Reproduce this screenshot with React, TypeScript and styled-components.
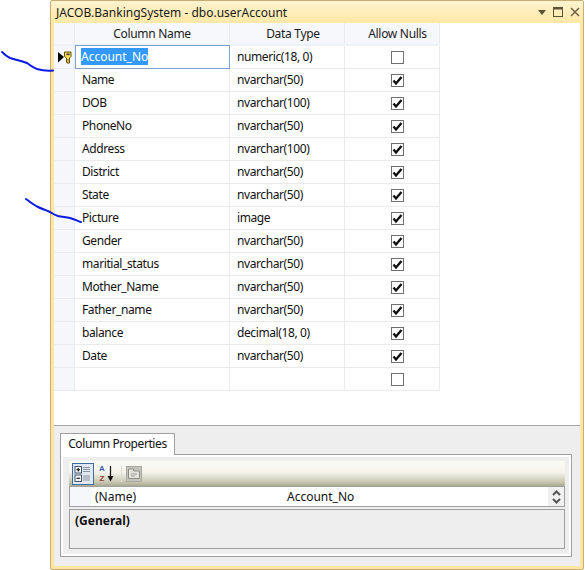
import React from "react";
import styled, { createGlobalStyle } from "styled-components";

const GlobalStyle = createGlobalStyle`
  html, body {
    margin: 0;
    padding: 0;
    background: #fff;
  }
  * {
    box-sizing: border-box;
  }
`;

const columns = [
  { name: "Account_No", type: "numeric(18, 0)", nulls: false },
  { name: "Name", type: "nvarchar(50)", nulls: true },
  { name: "DOB", type: "nvarchar(100)", nulls: true },
  { name: "PhoneNo", type: "nvarchar(50)", nulls: true },
  { name: "Address", type: "nvarchar(100)", nulls: true },
  { name: "District", type: "nvarchar(50)", nulls: true },
  { name: "State", type: "nvarchar(50)", nulls: true },
  { name: "Picture", type: "image", nulls: true },
  { name: "Gender", type: "nvarchar(50)", nulls: true },
  { name: "maritial_status", type: "nvarchar(50)", nulls: true },
  { name: "Mother_Name", type: "nvarchar(50)", nulls: true },
  { name: "Father_name", type: "nvarchar(50)", nulls: true },
  { name: "balance", type: "decimal(18, 0)", nulls: true },
  { name: "Date", type: "nvarchar(50)", nulls: true },
  { name: "", type: "", nulls: false },
];

const CheckBox = ({ checked }: { checked: boolean }) => (
  <Check>
    {checked && (
      <svg width="11" height="11" viewBox="0 0 11 11">
        <path d="M1.5 5.5 L4 8.5 L9.5 2" fill="none" stroke="#111" strokeWidth="2.4" />
      </svg>
    )}
  </Check>
);

const KeyMarker = () => (
  <svg width="14" height="13" viewBox="0 0 14 13">
    <path d="M0 1 L6 6 L0 11.5 Z" fill="#000" />
    <path d="M6.5 1 H13 V5.5 L11.5 7 V12 H9 V11 H8.5 V7 L6.5 5.5 Z" fill="#f7e04f" stroke="#5a4c10" strokeWidth="1" />
    <rect x="8.5" y="2.5" width="3" height="1.6" fill="#333" />
    <path d="M10 8 V10.5" stroke="#8a7410" strokeWidth="1" />
  </svg>
);

const CategoryIcon = () => (
  <svg width="18" height="18" viewBox="0 0 18 18">
    <rect x="1" y="1.5" width="6.5" height="6.5" fill="#eef3fa" stroke="#46566a" />
    <path d="M2.5 4.75 H6 M4.25 3 V6.5" stroke="#000" />
    <rect x="1" y="10" width="6.5" height="6.5" fill="#eef3fa" stroke="#46566a" />
    <path d="M2.5 13.25 H6" stroke="#000" />
    <path d="M9 2.5 H16 M9 4.5 H16 M9 6.5 H16 M9 11 H16 M9 13 H16 M9 15 H16" stroke="#8a93a0" />
  </svg>
);

const DownArrow = () => (
  <svg width="7" height="16" viewBox="0 0 7 16">
    <path d="M3.5 0 V11" stroke="#111" strokeWidth="1.2" />
    <path d="M0.5 10 H6.5 L3.5 15.5 Z" fill="#111" />
  </svg>
);

const PagesIcon = () => (
  <svg width="16" height="16" viewBox="0 0 16 16">
    <rect x="0.5" y="0.5" width="15" height="15" fill="#c4c4bc" stroke="#a8a8a0" />
    <path d="M2.5 5 V3 H7.5 V5 H13.5 V12.5 H2.5 Z" fill="#e4e4de" stroke="#8f8f88" />
    <path d="M5 8 H11 M5 10 H9" stroke="#a0a098" />
  </svg>
);

const SpinIcon = () => (
  <svg width="9" height="16" viewBox="0 0 9 16">
    <path d="M1 6 L4.5 2.5 L8 6 M1 10 L4.5 13.5 L8 10" fill="none" stroke="#555" strokeWidth="2" />
  </svg>
);

export default function App() {
  return (
    <>
      <GlobalStyle />
      <Page>
        <Window>
          <TitleBar>
            <Title>JACOB.BankingSystem - dbo.userAccount</Title>
            <WindowControls>
              <svg width="8" height="5" viewBox="0 0 8 5">
                <path d="M0 0 H8 L4 5 Z" fill="#5c5236" />
              </svg>
              <svg width="10" height="10" viewBox="0 0 10 10">
                <rect x="0.5" y="0.5" width="9" height="9" fill="none" stroke="#5c5236" />
                <rect x="0" y="0" width="10" height="2.5" fill="#5c5236" />
              </svg>
              <svg width="10" height="10" viewBox="0 0 10 10">
                <path d="M1 1 L9 9 M9 1 L1 9" stroke="#6b6248" strokeWidth="1.5" />
              </svg>
            </WindowControls>
          </TitleBar>
          <GridArea>
            <HeaderRow>
              <Selector $header />
              <HeaderCell>Column Name</HeaderCell>
              <HeaderCell $shift={12}>Data Type</HeaderCell>
              <HeaderCell $shift={11}>Allow Nulls</HeaderCell>
            </HeaderRow>
            {columns.map((col, i) => (
              <Row key={i}>
                <Selector>{i === 0 && <KeyMarker />}</Selector>
                {i === 0 ? (
                  <EditCell>
                    <Selected>{col.name}</Selected>
                  </EditCell>
                ) : (
                  <Cell>{col.name}</Cell>
                )}
                <Cell>{col.type}</Cell>
                <CheckCell>
                  <CheckBox checked={col.nulls} />
                </CheckCell>
              </Row>
            ))}
          </GridArea>
          <BottomPanel>
            <Tab>Column Properties</Tab>
            <TabBody>
              <Toolbar>
                <ToolButton $active>
                  <CategoryIcon />
                </ToolButton>
                <SortButton>
                  <SortLetters>
                    <SortA>A</SortA>
                    <SortZ>Z</SortZ>
                  </SortLetters>
                  <DownArrow />
                </SortButton>
                <ToolDivider />
                <ToolButton>
                  <PagesIcon />
                </ToolButton>
              </Toolbar>
              <NameRow>
                <NameGutter />
                <NameLabel>(Name)</NameLabel>
                <NameValue>Account_No</NameValue>
                <Spinner>
                  <SpinIcon />
                </Spinner>
              </NameRow>
              <GeneralBox>(General)</GeneralBox>
            </TabBody>
          </BottomPanel>
        </Window>
        <InkLayer width="585" height="570" viewBox="0 0 585 570">
          <path d="M2 52 C5 55 8 57 10 58 C16 60 22 61 27 63 C31 66 34 68 37 69 C42 70.5 48 71 53 70.5" />
          <path d="M26 199 C30 202 34 205 38 207 C42 209 46 210 50 212 C53 214 55 215 58 216 C62 217 66 217 70 218 C74 219 78 221 81 222" />
        </InkLayer>
      </Page>
    </>
  );
}

const Page = styled.div`
  position: relative;
  width: 585px;
  height: 570px;
  padding-left: 50px;
  background: #fff;
  overflow: hidden;
  font-family: "Noto Sans", "Liberation Sans", sans-serif;
  font-size: 12px;
  color: #111;
`;

const Window = styled.div`
  width: 534px;
  height: 570px;
  display: flex;
  flex-direction: column;
  background: #fde6a4;
  border: 1px solid #c9ad74;
  border-radius: 2px;
  padding: 0 3px 3px 3px;
`;

const TitleBar = styled.div`
  height: 22px;
  flex: none;
  display: flex;
  align-items: center;
  justify-content: space-between;
  margin: 0 -3px;
  padding: 0 3px 0 5px;
  background: linear-gradient(#fff3cf, #ffe8a6);
`;

const Title = styled.div`
  color: #1a1a1a;
`;

const WindowControls = styled.div`
  display: flex;
  align-items: center;
  gap: 7px;
`;

const GridArea = styled.div`
  flex: 1;
  background: #fff;
  min-height: 0;
`;

const Row = styled.div`
  display: grid;
  grid-template-columns: 21px 155px 115px 95px;
  width: 386px;
  height: 23px;
`;

const HeaderRow = styled(Row)`
  border-bottom: 2px solid #edf1f8;
`;

const Selector = styled.div<{ $header?: boolean }>`
  display: flex;
  align-items: center;
  justify-content: center;
  padding-left: 2px;
  background: #f6f7fa;
  border-right: 1px solid #e8ebf0;
  border-bottom: ${(p) => (p.$header ? "0" : "1px solid #e8ebf0")};
`;

const HeaderCell = styled.div<{ $shift?: number }>`
  display: flex;
  align-items: center;
  justify-content: center;
  padding-left: ${(p) => p.$shift ?? 0}px;
  background: #f6f8fc;
  border-right: 1px solid #e8ebf0;
  color: #1b1b1b;
  letter-spacing: -0.3px;
`;

const Cell = styled.div`
  display: flex;
  align-items: center;
  padding: 0 0 2px 7px;
  border-right: 1px solid #ebebeb;
  border-bottom: 1px solid #ebebeb;
  letter-spacing: -0.4px;
`;

const EditCell = styled.div`
  display: flex;
  align-items: center;
  padding: 0 0 1px 5px;
  margin-top: -1px;
  height: 24px;
  border: 1px solid #7da2ce;
`;

const Selected = styled.span`
  background: #3399ff;
  color: #fff;
  line-height: 17px;
`;

const CheckCell = styled(Cell)`
  justify-content: center;
  padding: 0 0 0 10px;
`;

const Check = styled.div`
  width: 13px;
  height: 13px;
  display: flex;
  align-items: center;
  justify-content: center;
  background: #fff;
  border: 1px solid #707070;
`;

const BottomPanel = styled.div`
  height: 141px;
  flex: none;
  padding: 7px 8px 9px 6px;
  background: #eeeeee;
  border-top: 1px solid #a6a6a6;
  display: flex;
  flex-direction: column;
  align-items: flex-start;
`;

const Tab = styled.div`
  width: 115px;
  height: 24px;
  margin-bottom: -1px;
  padding-bottom: 3px;
  position: relative;
  z-index: 1;
  display: flex;
  align-items: center;
  justify-content: center;
  background: #fff;
  border: 1px solid #a0a0a0;
  border-bottom: 0;
  letter-spacing: -0.4px;
`;

const TabBody = styled.div`
  align-self: stretch;
  flex: 1;
  display: flex;
  flex-direction: column;
  padding: 6px 6px 7px 8px;
  background: #eeeeee;
  border: 1px solid #a0a0a0;
  box-shadow: inset 0 0 0 2px #fff;
`;

const Toolbar = styled.div`
  height: 25px;
  flex: none;
  display: flex;
  align-items: center;
  gap: 1px;
  padding-left: 3px;
  background: linear-gradient(#fbfbf6 0%, #f4f4ec 45%, #c6c6b0 85%, #a9a98f 100%);
  border-radius: 1px;
`;

const ToolButton = styled.div<{ $active?: boolean }>`
  width: 22px;
  height: 22px;
  display: flex;
  align-items: center;
  justify-content: center;
  border: 1px solid ${(p) => (p.$active ? "#3a6ea5" : "transparent")};
  background: ${(p) => (p.$active ? "#e2e8f0" : "transparent")};
`;

const SortButton = styled.div`
  width: 19px;
  height: 23px;
  display: flex;
  align-items: center;
  gap: 1px;
  padding-left: 3px;
`;

const SortLetters = styled.div`
  width: 8px;
  display: flex;
  flex-direction: column;
  align-items: center;
  font-family: "Liberation Sans", sans-serif;
  font-size: 8px;
  font-weight: 700;
  line-height: 9.5px;
`;

const SortA = styled.span`
  color: #3b5fb0;
`;

const SortZ = styled.span`
  color: #a03a3a;
`;

const ToolDivider = styled.div`
  width: 1px;
  height: 16px;
  margin: 0 0 0 6px;
  background: #dcdcd2;
`;

const NameRow = styled.div`
  height: 21px;
  flex: none;
  display: flex;
  align-items: center;
  background: #fff;
  border: 1px solid #a0a0a0;
`;

const NameGutter = styled.div`
  width: 21px;
  height: 100%;
  background: #f5f7fb;
`;

const NameLabel = styled.div`
  width: 196px;
  padding-left: 4px;
`;

const NameValue = styled.div`
  flex: 1;
`;

const Spinner = styled.div`
  width: 16px;
  height: 100%;
  display: flex;
  align-items: center;
  justify-content: center;
  background: #f0f0f0;
`;

const GeneralBox = styled.div`
  height: 40px;
  flex: none;
  margin-top: 2px;
  padding: 2px 5px;
  font-weight: 700;
  border: 1px solid #a0a0a0;
`;

const InkLayer = styled.svg`
  position: absolute;
  left: 0;
  top: 0;
  pointer-events: none;

  path {
    fill: none;
    stroke: #0a1ae0;
    stroke-width: 2;
    stroke-linecap: round;
  }
`;
